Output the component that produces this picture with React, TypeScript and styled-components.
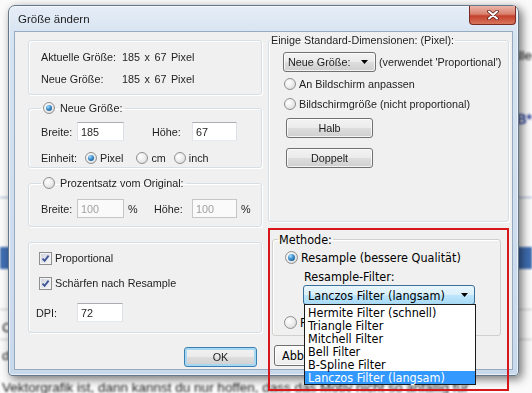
import React from 'react';
import styled, { createGlobalStyle, css } from 'styled-components';

const GlobalStyle = createGlobalStyle`
  html, body { margin: 0; padding: 0; }
  body {
    width: 532px;
    height: 393px;
    overflow: hidden;
    background: #fafafa;
    font-family: 'Liberation Sans', Arial, sans-serif;
  }
  *, *::before, *::after { box-sizing: border-box; }
`;

const NARROW = `'Liberation Sans Narrow', 'Arial Narrow', 'DejaVu Sans Condensed', sans-serif`;

const Desktop = styled.div`
  position: relative;
  width: 532px;
  height: 393px;
  overflow: hidden;
  background: #fafafa;
`;

/* the web page behind the dialog */
const Page = styled.div`
  display: flex;
  flex-direction: column;
  filter: blur(0.8px);
  color: #1a1a1a;
  font-size: 13.5px;
`;

const PageRow = styled.div<{ $h: number; $right?: boolean }>`
  height: ${(p) => p.$h}px;
  display: flex;
  align-items: center;
  justify-content: ${(p) => (p.$right ? 'flex-end' : 'flex-start')};
  white-space: nowrap;
  overflow: hidden;
  padding-left: 2px;
`;

const PageRule = styled.div<{ $color: string; $h?: number }>`
  height: ${(p) => p.$h ?? 1}px;
  flex: none;
  background: ${(p) => p.$color};
`;

const PageHeading = styled.span`
  color: #2b3f9a;
  font-weight: bold;
  font-size: 14px;
`;

/* dialog window */
const Window = styled.div`
  position: absolute;
  left: 8px;
  top: 5px;
  width: 511px;
  height: 371px;
  display: flex;
  flex-direction: column;
  padding: 0 5px 5px;
  border: 1px solid #65778b;
  border-radius: 7px 7px 4px 4px;
  background: linear-gradient(180deg, #e6eef7 0%, #d6e3f1 8%, #c9d9ec 100%);
  box-shadow: inset 0 0 0 1px rgba(255, 255, 255, 0.55), 3px 3px 10px rgba(0, 0, 0, 0.55);
  font-size: 10.8px;
  line-height: 14px;
  color: #1e1e1e;
`;

const TitleBar = styled.div`
  height: 25px;
  flex: none;
  display: flex;
  align-items: center;
  padding-left: 4px;
  filter: blur(0.45px);
`;

const Title = styled.span`
  font-size: 11.5px;
  color: #1c1c1c;
`;

const CloseButton = styled.div`
  margin-left: auto;
  margin-right: -3px;
  align-self: flex-start;
  width: 47px;
  height: 19px;
  border: 1px solid #7a2b25;
  border-top: none;
  border-radius: 0 0 4px 4px;
  background: linear-gradient(180deg, #ebb4a9 0%, #d9826f 45%, #c4402c 55%, #d8755c 100%);
  display: flex;
  align-items: center;
  justify-content: center;
`;

const Client = styled.div`
  flex: 1;
  display: flex;
  gap: 6px;
  padding: 8px 0 0 13px;
  background: #f0f0f0;
  border: 1px solid #97aac0;
  min-height: 0;
`;

const Column = styled.div<{ $w: number; $mt?: number; $soft?: boolean }>`
  width: ${(p) => p.$w}px;
  flex: none;
  display: flex;
  flex-direction: column;
  margin-top: ${(p) => p.$mt ?? 0}px;
  ${(p) => p.$soft && 'filter: blur(0.45px);'}
`;

const groupLines = css`
  border: 1px solid #d5dfe5;
  border-radius: 3px;
  box-shadow: inset 1px 1px 0 #fff, 1px 1px 0 #fff;
`;

const Panel = styled.div<{ $mt?: number; $pad: string }>`
  ${groupLines};
  margin-top: ${(p) => p.$mt ?? 0}px;
  padding: ${(p) => p.$pad};
  display: flex;
  flex-direction: column;
`;

const Frame = styled.fieldset<{ $mt?: number; $mx?: string; $pad: string; $h?: number; $soft?: boolean }>`
  ${groupLines};
  margin: ${(p) => p.$mt ?? 0}px ${(p) => p.$mx ?? '0 0 0'};
  padding: ${(p) => p.$pad};
  min-width: 0;
  display: flex;
  flex-direction: column;
  ${(p) => p.$h && `height: ${p.$h}px;`}
  ${(p) => p.$soft && 'filter: blur(0.45px);'}
`;

const Legend = styled.legend<{ $sharp?: boolean; $tight?: boolean }>`
  padding: 0 ${(p) => (p.$sharp || p.$tight ? 1 : 2)}px;
  line-height: ${(p) => (p.$sharp ? 15 : 14)}px;
  display: flex;
  align-items: center;
  gap: 5px;
  white-space: nowrap;
  ${(p) => p.$sharp && `font-family: ${NARROW}; font-size: 12.5px; color: #000;`}
`;

const Row = styled.div<{ $mt?: number; $ml?: number; $h?: number }>`
  display: flex;
  align-items: center;
  height: ${(p) => p.$h ?? 14}px;
  flex: none;
  margin-top: ${(p) => p.$mt ?? 0}px;
  margin-left: ${(p) => p.$ml ?? 0}px;
  white-space: nowrap;
`;

const Label = styled.span<{ $w?: number; $ml?: number }>`
  flex: none;
  width: ${(p) => (p.$w ? `${p.$w}px` : 'auto')};
  margin-left: ${(p) => p.$ml ?? 0}px;
`;

const Value = styled.span`
  word-spacing: 1.5px;
`;

const Field = styled.input<{ $w: number }>`
  width: ${(p) => p.$w}px;
  height: 19px;
  flex: none;
  margin: 0;
  padding: 0 3px;
  border: 1px solid;
  border-color: #abadb3 #dbdfe6 #e3e9ef #e2e3ea;
  background: #fff;
  font: inherit;
  color: #1e1e1e;
  outline: none;
  &:disabled {
    color: #a0a0a0;
    background: #fafafa;
    border-color: #c6c6c6;
  }
`;

const Radio = styled.span<{ $on?: boolean; $size?: number }>`
  width: ${(p) => p.$size ?? 12}px;
  height: ${(p) => p.$size ?? 12}px;
  flex: none;
  border-radius: 50%;
  border: 1px solid #8e8f8f;
  background: radial-gradient(circle at 35% 35%, #ffffff 0%, #ececec 50%, #d2d2d2 100%);
  display: inline-flex;
  align-items: center;
  justify-content: center;
  &::after {
    content: '';
    display: ${(p) => (p.$on ? 'block' : 'none')};
    width: ${(p) => (p.$size ?? 12) - 6}px;
    height: ${(p) => (p.$size ?? 12) - 6}px;
    border-radius: 50%;
    background: radial-gradient(circle at 35% 30%, #a9e0ff 0%, #3a8ccc 45%, #154a78 100%);
  }
`;

const Option = styled.span<{ $mr?: number }>`
  display: inline-flex;
  align-items: center;
  gap: 3px;
  margin-right: ${(p) => p.$mr ?? 0}px;
`;

const CheckBox = styled.span`
  width: 13px;
  height: 13px;
  flex: none;
  border: 1px solid #8e8f8f;
  background: linear-gradient(135deg, #cdd1da 0%, #e6e8ee 55%, #f7f7f7 100%);
  box-shadow: inset 0 0 0 1px #f2f2f2;
  display: flex;
  align-items: center;
  justify-content: center;
  margin-right: 3px;
`;

const PushButton = styled.button<{ $w: number; $h?: number; $mt?: number; $ml?: number }>`
  width: ${(p) => p.$w}px;
  height: ${(p) => p.$h ?? 20}px;
  flex: none;
  margin: ${(p) => p.$mt ?? 0}px 0 0 ${(p) => p.$ml ?? 0}px;
  padding: 0;
  border: 1px solid #707070;
  border-radius: 3px;
  background: linear-gradient(180deg, #f2f2f2 0%, #ebebeb 50%, #dddddd 51%, #cfcfcf 100%);
  box-shadow: inset 0 0 0 1px rgba(255, 255, 255, 0.75);
  font: inherit;
  color: #1e1e1e;
  display: flex;
  align-items: center;
  justify-content: center;
`;

const OkButton = styled(PushButton)`
  align-self: flex-end;
  margin-right: 5px;
  border-color: #3c7fb1;
  box-shadow: inset 0 0 0 2px #a6d8f3;
`;

const CancelButton = styled(PushButton)`
  justify-content: flex-start;
  padding-left: 7px;
  font-family: ${NARROW};
  font-size: 12.5px;
  color: #000;
  background: linear-gradient(180deg, #fbfbfb 0%, #ececec 100%);
  border-color: #6f6f6f;
`;

const DropButton = styled.div`
  width: 93px;
  height: 20px;
  flex: none;
  border: 1px solid #707070;
  border-radius: 3px;
  background: linear-gradient(180deg, #f2f2f2 0%, #ebebeb 50%, #dddddd 51%, #cfcfcf 100%);
  box-shadow: inset 0 0 0 1px rgba(255, 255, 255, 0.75);
  display: flex;
  align-items: center;
  justify-content: space-between;
  padding: 0 7px 0 4px;
`;

const Hint = styled.span`
  margin-left: 3px;
`;

const DimsBody = styled.div`
  display: flex;
  flex-direction: column;
  margin-left: 13px;
`;

/* the "Methode" block, captured sharp */
const Sharp = styled.div`
  font-family: ${NARROW};
  font-size: 12.5px;
  line-height: 15px;
  color: #000;
`;

const MethodGroup = styled(Frame)`
  border-color: #d0d0cc;
  box-shadow: inset 1px 1px 0 #fff;
`;

const FilterSelect = styled.div`
  position: relative;
  width: 172px;
  height: 20px;
  flex: none;
  margin: 1px 0 0 25px;
  border: 1px solid #3c6f98;
  border-radius: 3px;
  background: linear-gradient(180deg, #eaf6fd 0%, #d9f0fc 50%, #bee6fd 51%, #a7d9f5 100%);
  display: flex;
  align-items: center;
  justify-content: space-between;
  padding: 0 6px 0 4px;
`;

const FilterList = styled.ul`
  position: absolute;
  top: 100%;
  left: 0;
  z-index: 3;
  width: 172px;
  margin: 0;
  padding: 1px 0 0;
  list-style: none;
  background: #fff;
  border: 1px solid #1a1a1a;
`;

const FilterItem = styled.li<{ $active?: boolean }>`
  height: 13px;
  line-height: 13px;
  padding-left: 3px;
  white-space: nowrap;
  background: ${(p) => (p.$active ? '#3399ff' : 'transparent')};
  color: ${(p) => (p.$active ? '#fff' : '#000')};
`;

const Highlight = styled.div`
  position: absolute;
  left: 268px;
  top: 228px;
  width: 241px;
  height: 163px;
  border: 2px solid #d8161c;
  z-index: 10;
  pointer-events: none;
`;

function CloseIcon() {
  return (
    <svg width="12" height="10" viewBox="0 0 12 10">
      <path d="M2 1.5 L10 8.5 M10 1.5 L2 8.5" stroke="#5c1d18" strokeWidth="3.6" strokeLinecap="round" />
      <path d="M2 1.5 L10 8.5 M10 1.5 L2 8.5" stroke="#fff" strokeWidth="2" strokeLinecap="round" />
    </svg>
  );
}

function Arrow() {
  return (
    <svg width="7" height="4" viewBox="0 0 7 4">
      <path d="M0 0 H7 L3.5 4 Z" fill="#000" />
    </svg>
  );
}

function Check() {
  return (
    <svg width="9" height="9" viewBox="0 0 9 9">
      <path d="M1.5 4.6 L3.6 6.9 L7.6 1.6" fill="none" stroke="#3f5597" strokeWidth="1.8" />
    </svg>
  );
}

const filters = [
  'Hermite Filter (schnell)',
  'Triangle Filter',
  'Mitchell Filter',
  'Bell Filter',
  'B-Spline Filter',
  'Lanczos Filter (langsam)',
];

// only the strips of the page that peek out round the dialog
function BackgroundPage() {
  return (
    <Page>
      <PageRow $h={48} />
      <PageRow $h={14} $right>
        alle
      </PageRow>
      <PageRow $h={50} />
      <PageRow $h={14} $right>
        <PageHeading>B*</PageHeading>
      </PageRow>
      <PageRow $h={71} />
      <PageRule $color="#8ea5c8" />
      <PageRow $h={49} />
      <PageRule $color="#3f6db0" $h={22} />
      <PageRow $h={40} />
      <PageRule $color="#c4c4c4" />
      <PageRow $h={10} />
      <PageRow $h={14}>C</PageRow>
      <PageRow $h={5} />
      <PageRule $color="#c4c4c4" />
      <PageRow $h={8} />
      <PageRow $h={14}>da</PageRow>
      <PageRow $h={17} />
      <PageRow $h={16}>Vektorgrafik ist, dann kannst du nur hoffen, dass das Motiv nicht so anfällig für</PageRow>
    </Page>
  );
}

export default function App() {
  return (
    <>
      <GlobalStyle />
      <Desktop>
        <BackgroundPage />
        <Window>
          <TitleBar>
            <Title>Größe ändern</Title>
            <CloseButton>
              <CloseIcon />
            </CloseButton>
          </TitleBar>
          <Client>
            <Column $w={234} $soft>
              <Panel $pad="9px 0 8px 12px">
                <Row>
                  <Label $w={81}>Aktuelle Größe:</Label>
                  <Value>185 x 67 Pixel</Value>
                </Row>
                <Row $mt={8}>
                  <Label $w={81}>Neue Größe:</Label>
                  <Value>185 x 67 Pixel</Value>
                </Row>
              </Panel>

              <Frame $mt={6} $pad="7px 0 2px 12px">
                <Legend>
                  <Radio $on />
                  Neue Größe:
                </Legend>
                <Row $h={19}>
                  <Label $w={36}>Breite:</Label>
                  <Field $w={47} defaultValue="185" />
                  <Label $w={40} $ml={28}>Höhe:</Label>
                  <Field $w={45} defaultValue="67" />
                </Row>
                <Row $mt={10}>
                  <Label $w={44}>Einheit:</Label>
                  <Option $mr={13}>
                    <Radio $on />
                    Pixel
                  </Option>
                  <Option $mr={8}>
                    <Radio />
                    cm
                  </Option>
                  <Option>
                    <Radio />
                    inch
                  </Option>
                </Row>
              </Frame>

              <Frame $mt={8} $pad="9px 0 8px 12px">
                <Legend>
                  <Radio />
                  Prozentsatz vom Original:
                </Legend>
                <Row $h={19}>
                  <Label $w={36}>Breite:</Label>
                  <Field $w={47} defaultValue="100" disabled />
                  <Label $w={26} $ml={4}>%</Label>
                  <Label $w={38}>Höhe:</Label>
                  <Field $w={45} defaultValue="100" disabled />
                  <Label $ml={4}>%</Label>
                </Row>
              </Frame>

              <Panel $mt={15} $pad="8px 0 10px 7px">
                <Row $ml={3}>
                  <CheckBox>
                    <Check />
                  </CheckBox>
                  Proportional
                </Row>
                <Row $ml={3} $mt={11}>
                  <CheckBox>
                    <Check />
                  </CheckBox>
                  Schärfen nach Resample
                </Row>
                <Row $mt={13} $h={19}>
                  <Label $w={41}>DPI:</Label>
                  <Field $w={46} defaultValue="72" />
                </Row>
              </Panel>

              <OkButton type="button" $w={73} $mt={14}>
                OK
              </OkButton>
            </Column>

            <Column $w={241} $mt={-7}>
              <Frame $pad="5px 0 0 1px" $h={189} $soft>
                <Legend $tight>Einige Standard-Dimensionen: (Pixel):</Legend>
                <DimsBody>
                  <Row $h={20}>
                    <DropButton>
                      Neue Größe:
                      <Arrow />
                    </DropButton>
                    <Hint>(verwendet 'Proportional')</Hint>
                  </Row>
                  <Row $mt={5} $ml={1}>
                    <Option>
                      <Radio />
                      An Bildschirm anpassen
                    </Option>
                  </Row>
                  <Row $mt={6} $ml={1}>
                    <Option>
                      <Radio />
                      Bildschirmgröße (nicht proportional)
                    </Option>
                  </Row>
                  <PushButton type="button" $w={87} $mt={7} $ml={3}>
                    Halb
                  </PushButton>
                  <PushButton type="button" $w={87} $mt={10} $ml={3}>
                    Doppelt
                  </PushButton>
                </DimsBody>
              </Frame>

              <Sharp>
                <MethodGroup $mt={10} $mx="8px 0 4px" $pad="3px 0 5px 5px">
                  <Legend $sharp>Methode:</Legend>
                  <Row $h={15} $ml={7}>
                    <Option>
                      <Radio $on $size={13} />
                      Resample (bessere Qualität)
                    </Option>
                  </Row>
                  <Row $h={15} $mt={4} $ml={26}>
                    Resample-Filter:
                  </Row>
                  <FilterSelect>
                    Lanczos Filter (langsam)
                    <Arrow />
                    <FilterList>
                      {filters.map((f, i) => (
                        <FilterItem key={f} $active={i === filters.length - 1}>
                          {f}
                        </FilterItem>
                      ))}
                    </FilterList>
                  </FilterSelect>
                  <Row $h={15} $mt={10} $ml={6}>
                    <Option>
                      <Radio $size={13} />
                      Resize (schneller)
                    </Option>
                  </Row>
                </MethodGroup>
                <CancelButton type="button" $w={66} $h={21} $mt={9} $ml={6}>
                  Abbrechen
                </CancelButton>
              </Sharp>
            </Column>
          </Client>
        </Window>
        <Highlight />
      </Desktop>
    </>
  );
}
